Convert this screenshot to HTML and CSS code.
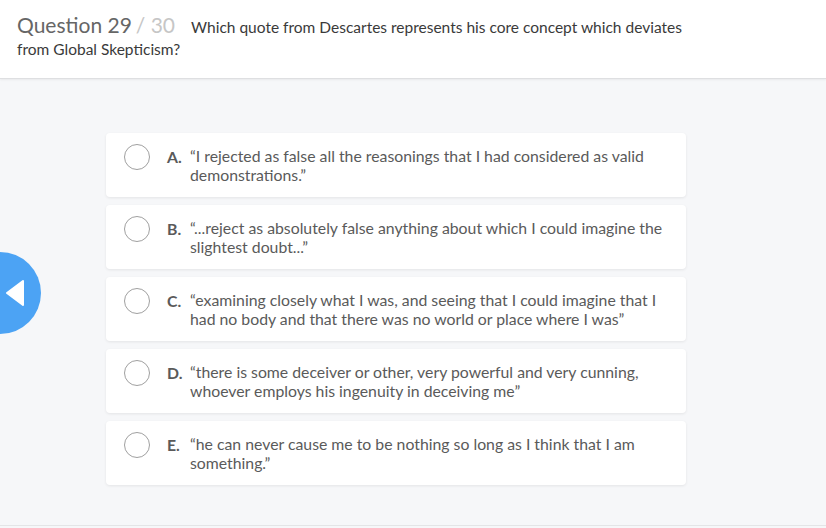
FILE: index.html
```html
<!DOCTYPE html>
<html>
<head>
<meta charset="utf-8">
<link rel="stylesheet" href="styles.css">
</head>
<body>
<header class="header">
  <p class="question"><span class="qnum">Question 29</span> <span class="qtotal">/ 30</span><span class="qtext">Which quote from Descartes represents his core concept which deviates<br>from Global Skepticism?</span></p>
</header>
<main class="main">
  <button class="back" aria-label="Previous"><svg width="20" height="26" viewBox="0 0 20 26"><path d="M17 1 L1 13 L17 25 Z" fill="#fff" stroke="#fff" stroke-width="2" stroke-linejoin="round"/></svg></button>
  <div class="options">
    <div class="option"><span class="radio"></span><span class="letter">A.</span><span class="text">“I rejected as false all the reasonings that I had considered as valid<br>demonstrations.”</span></div>
    <div class="option"><span class="radio"></span><span class="letter">B.</span><span class="text">“...reject as absolutely false anything about which I could imagine the<br>slightest doubt...”</span></div>
    <div class="option"><span class="radio"></span><span class="letter">C.</span><span class="text">“examining closely what I was, and seeing that I could imagine that I<br>had no body and that there was no world or place where I was”</span></div>
    <div class="option"><span class="radio"></span><span class="letter">D.</span><span class="text">“there is some deceiver or other, very powerful and very cunning,<br>whoever employs his ingenuity in deceiving me”</span></div>
    <div class="option"><span class="radio"></span><span class="letter">E.</span><span class="text">“he can never cause me to be nothing so long as I think that I am<br>something.”</span></div>
  </div>
</main>
</body>
</html>
```
FILE: styles.css
```css
html, body {
  margin: 0;
  padding: 0;
}
body {
  width: 826px;
  height: 528px;
  overflow: hidden;
  background: #f6f7f9;
  font-family: Lato, "Open Sans", sans-serif;
  position: relative;
}
.header {
  background: #fff;
  height: 79px;
  box-sizing: border-box;
  padding: 14px 17px 0;
  border-bottom: 1px solid #dedfe1;
  box-shadow: 0 1px 2px rgba(0,0,0,0.06);
}
.question {
  margin: 0;
  color: #3a3a3a;
  font-size: 15.5px;
  line-height: 22px;
}
.qnum {
  font-size: 21px;
  color: #666;
}
.qtotal {
  font-size: 21px;
  color: #c6c6c6;
  margin-right: 16px;
}
.main {
  padding-top: 54px;
  height: 447px;
  box-sizing: border-box;
  border-bottom: 1px solid #e4e5e7;
}
.options {
  width: 580px;
  margin-left: 106px;
  display: flex;
  flex-direction: column;
  gap: 8px;
}
.option {
  background: #fff;
  border-radius: 4px;
  box-shadow: 0 1px 3px rgba(0,0,0,0.08);
  height: 64px;
  box-sizing: border-box;
  display: flex;
  align-items: center;
  padding-left: 18px;
  color: #5a5a5a;
  font-size: 15.8px;
  line-height: 19px;
}
.radio {
  width: 26px;
  height: 26px;
  border: 1.5px solid #a0a0a0;
  border-radius: 50%;
  flex: none;
  margin-right: 17px;
  box-sizing: border-box;
  align-self: flex-start;
  margin-top: 11px;
}
.letter {
  font-weight: 700;
  width: 23px;
  flex: none;
  align-self: flex-start;
  margin-top: 14px;
}
.back {
  position: absolute;
  left: -41px;
  top: 252px;
  width: 82px;
  height: 82px;
  border-radius: 50%;
  background: #4ca3f4;
  border: none;
  padding: 0 0 0 40px;
  display: flex;
  align-items: center;
  justify-content: center;
}
.back svg {
  margin-left: -8px;
}
```
